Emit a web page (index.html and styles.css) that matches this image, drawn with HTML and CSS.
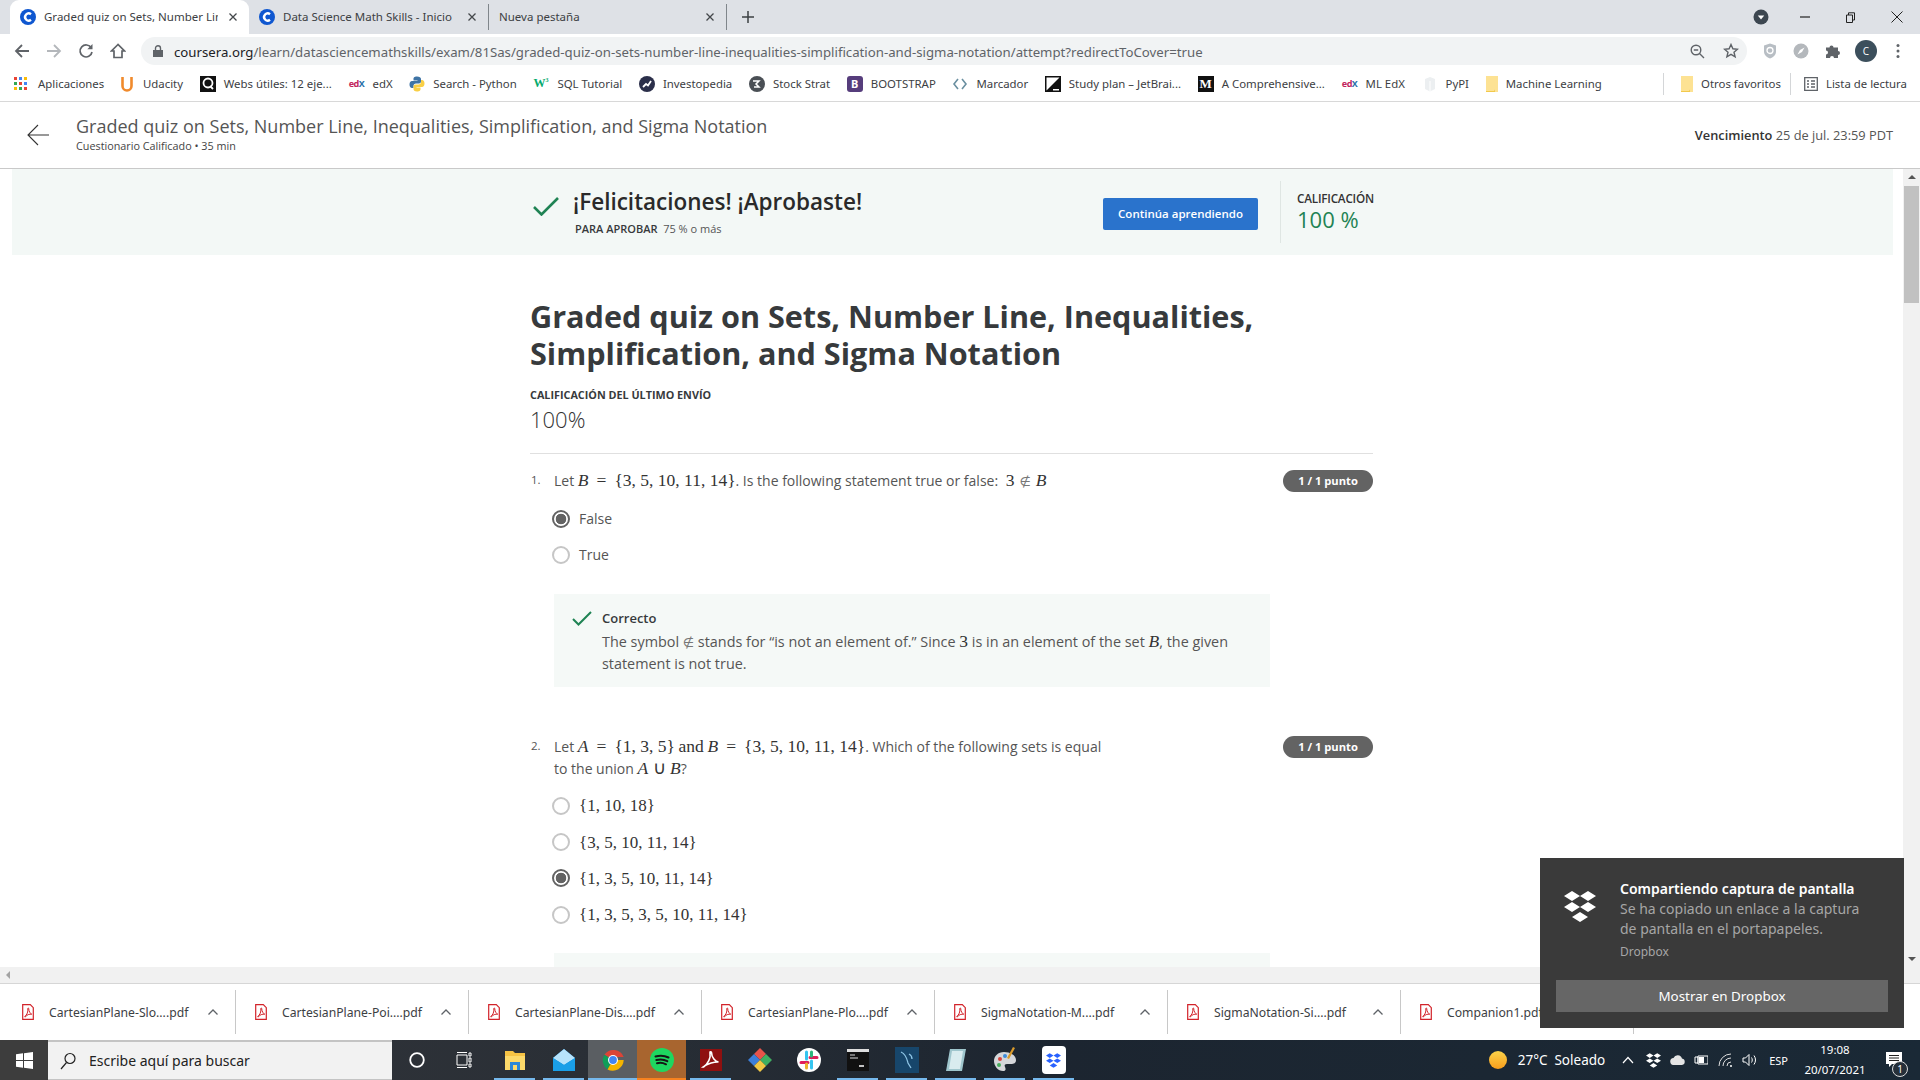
FILE: index.html
```html
<!DOCTYPE html>
<html lang="es">
<head>
<meta charset="utf-8">
<title>Graded quiz</title>
<link rel="stylesheet" href="styles.css">
</head>
<body>
<svg class="defs" width="0" height="0" aria-hidden="true">
  <symbol id="cou" viewBox="0 0 16 16"><circle cx="8" cy="8" r="8" fill="#0f57d0"/><path d="M11 5.200A3.600 3.600 0 1 0 11 10.800" fill="none" stroke="#fff" stroke-width="2.400"/></symbol>
  <symbol id="x" viewBox="0 0 10 10"><path d="M1.500 1.500l7 7M8.500 1.500l-7 7" stroke="#44474b" stroke-width="1.300" fill="none"/></symbol>
  <symbol id="pdf" viewBox="0 0 12 16"><path d="M.7.700h7.600l3 3v11.600H.7z" fill="#fff" stroke="#d2232a" stroke-width="1.200"/><path d="M2.600 12.600C5 11 6.300 7.600 5.800 4.600c-.2-.9.9-.9.9 0 0 3 2 5.200 3 5.600-2.200-.2-5 .4-6.400 2.800z" fill="none" stroke="#d2232a" stroke-width="1"/></symbol>
  <symbol id="chev" viewBox="0 0 12 8"><path d="M1.500 6.500L6 2l4.500 4.500" fill="none" stroke="#5f6368" stroke-width="1.300"/></symbol>
  <symbol id="fold" viewBox="0 0 12 16"><path d="M0 0h12v16H0z" fill="#fde293"/><path d="M0 15h8l1-1.500V16H0z" fill="#f2c94c"/></symbol>
  <symbol id="drop" viewBox="0 0 32 31"><path d="M8 0l8 5-8 5-8-5zM24 0l8 5-8 5-8-5zM8 11l8 5-8 5-8-5zM24 11l8 5-8 5-8-5zM16 21l8 5-8 5-8-5z" fill="#fff"/></symbol>
</svg>

<div class="tabstrip">
  <div class="tab tab-active"><svg class="fav"><use href="#cou"/></svg><span class="tabtext">Graded quiz on Sets, Number Line, Inequalities</span><svg class="tabx"><use href="#x"/></svg></div>
  <div class="tab"><svg class="fav"><use href="#cou"/></svg><span class="tabtext">Data Science Math Skills - Inicio | Coursera</span><svg class="tabx"><use href="#x"/></svg></div>
  <div class="tab tab-sep"><span class="tabtext tabtext-plain">Nueva pestaña</span><svg class="tabx"><use href="#x"/></svg></div>
  <div class="newtab"><svg width="12" height="12" viewBox="0 0 12 12"><path d="M6 0v12M0 6h12" stroke="#3c4043" stroke-width="1.500"/></svg></div>
  <div class="winctl">
    <svg width="16" height="16" viewBox="0 0 16 16" class="wc-prof"><circle cx="8" cy="8" r="7.500" fill="#3c4650"/><path d="M4.800 6.500h6.400L8 10.500z" fill="#fff"/></svg>
    <svg width="10" height="10" viewBox="0 0 10 10" class="wc-min"><path d="M0 5h10" stroke="#222" stroke-width="1.200"/></svg>
    <svg width="11" height="11" viewBox="0 0 11 11" class="wc-res"><path d="M1.500 3h6v7.500h-6zM3.500 3V.8h6v7.200H7.500" fill="none" stroke="#222"/></svg>
    <svg width="12" height="12" viewBox="0 0 12 12" class="wc-close"><path d="M.5.500l11 11M11.500.500l-11 11" stroke="#222"/></svg>
  </div>
</div>

<div class="toolbar">
  <svg class="tb t1" viewBox="0 0 16 16"><path d="M15 8H2M8 2L2 8l6 6" fill="none" stroke="#5f6368" stroke-width="1.800"/></svg>
  <svg class="tb t2" viewBox="0 0 16 16"><path d="M1 8h13M8 2l6 6-6 6" fill="none" stroke="#b4b7bb" stroke-width="1.800"/></svg>
  <svg class="tb t3" viewBox="0 0 16 16"><path d="M13.300 5A6 6 0 1 0 14 9" fill="none" stroke="#5f6368" stroke-width="1.700"/><path d="M14.500 1v5.200H9.300z" fill="#5f6368"/></svg>
  <svg class="tb t4" viewBox="0 0 16 16"><path d="M8 1.500L1.500 8H4v6.500h8V8h2.500z" fill="none" stroke="#5f6368" stroke-width="1.700"/></svg>
  <div class="omni">
    <svg class="lock" width="10" height="12" viewBox="0 0 10 12"><path d="M0 5h10v7H0z" fill="#5f6368"/><path d="M2.500 5V3.200a2.500 2.500 0 0 1 5 0V5" fill="none" stroke="#5f6368" stroke-width="1.400"/></svg>
    <span class="url"><b>coursera.org</b>/learn/datasciencemathskills/exam/81Sas/graded-quiz-on-sets-number-line-inequalities-simplification-and-sigma-notation/attempt?redirectToCover=true</span>
    <svg class="om1" width="15" height="15" viewBox="0 0 15 15"><circle cx="6" cy="6" r="4.800" fill="none" stroke="#5f6368" stroke-width="1.400"/><path d="M9.500 9.500L14 14M3.800 6h4.400" stroke="#5f6368" stroke-width="1.400"/></svg>
    <svg class="om2" width="16" height="16" viewBox="0 0 16 16"><path d="M8 1.500l1.900 4.300 4.600.4-3.500 3 1.100 4.600L8 11.300l-4.100 2.500L5 9.200l-3.500-3 4.600-.4z" fill="none" stroke="#5f6368" stroke-width="1.400"/></svg>
  </div>
  <div class="exts">
    <svg width="14" height="16" viewBox="0 0 14 16"><path d="M7 .5l6 2v6c0 3.500-3 6-6 7-3-1-6-3.500-6-7v-6z" fill="#b8bec4"/><circle cx="7" cy="7.500" r="3" fill="none" stroke="#fff" stroke-width="1.300"/></svg>
    <svg width="16" height="16" viewBox="0 0 16 16"><circle cx="8" cy="8" r="7.500" fill="#b4b8bc"/><path d="M11.500 4.500L9 9l-4.500 2.500L7 7z" fill="#fff"/></svg>
    <svg width="16" height="16" viewBox="0 0 16 16"><path d="M1 4.500h3.500a2 2 0 1 1 4 0H13V8a2 2 0 1 1 0 4v3H9a2 2 0 1 0-4 0H1v-3.500a2 2 0 1 0 0-4z" fill="#5f6368"/></svg>
    <span class="avatar">C</span>
    <svg width="4" height="16" viewBox="0 0 4 16"><circle cx="2" cy="2.500" r="1.500" fill="#5f6368"/><circle cx="2" cy="8" r="1.500" fill="#5f6368"/><circle cx="2" cy="13.500" r="1.500" fill="#5f6368"/></svg>
  </div>
</div>

<div class="bookmarks">
  <span class="bm bm-apps"><svg width="14" height="14" viewBox="0 0 14 14"><path d="M0 0h3v3H0z" fill="#ea4335"/><path d="M5 0h3v3H5z" fill="#4285f4"/><path d="M10 0h3v3h-3z" fill="#fbbc05"/><path d="M0 5h3v3H0z" fill="#34a853"/><path d="M5 5h3v3H5z" fill="#ea4335"/><path d="M10 5h3v3h-3z" fill="#4285f4"/><path d="M0 10h3v3H0z" fill="#fbbc05"/><path d="M5 10h3v3H5z" fill="#34a853"/><path d="M10 10h3v3h-3z" fill="#ea4335"/></svg>Aplicaciones</span>
  <span class="bm bm-u"><svg width="12" height="16" viewBox="0 0 12 16"><path d="M1.500 1v9a4.500 4.500 0 0 0 9 0V1" fill="none" stroke="#f08a2c" stroke-width="2.600"/></svg>Udacity</span>
  <span class="bm"><svg width="16" height="16" viewBox="0 0 16 16"><path d="M0 0h16v16H0z" fill="#111"/><circle cx="8" cy="7" r="4.500" fill="none" stroke="#fff" stroke-width="1.800"/><path d="M10 10l3 3" stroke="#fff" stroke-width="1.800"/></svg>Webs útiles: 12 eje...</span>
  <span class="bm"><span class="edx"><i>ed</i><u>X</u></span>edX</span>
  <span class="bm"><svg width="16" height="16" viewBox="0 0 16 16"><path d="M8 .5c-3 0-3.500 1.200-3.500 2.500v1.500H8.500V5H3C1.500 5 .5 6.500.5 8.500S1.500 12 3 12h1.500v-2c0-1.500 1-2.500 2.500-2.500h3c1.200 0 2-.8 2-2V3C12 1.500 10.500.5 8 .5z" fill="#3f74a5"/><path d="M8 15.500c3 0 3.500-1.200 3.500-2.500v-1.500H7.500V11H13c1.500 0 2.500-1.500 2.500-3.500S14.500 4 13 4h-1v2c0 1.500-1 2.500-2.500 2.500h-3c-1.200 0-2 .8-2 2V13c0 1.500 1 2.500 3.500 2.500z" fill="#f9cf45"/></svg>Search - Python</span>
  <span class="bm bm-w"><span class="w3">W<sup>3</sup></span>SQL Tutorial</span>
  <span class="bm"><svg width="16" height="16" viewBox="0 0 16 16"><circle cx="8" cy="8" r="8" fill="#2b2f4a"/><path d="M4 11l3-3 2 1.500L12 5" fill="none" stroke="#fff" stroke-width="1.800"/></svg>Investopedia</span>
  <span class="bm"><svg width="16" height="16" viewBox="0 0 16 16"><circle cx="8" cy="8" r="8" fill="#4a4f55"/><path d="M4 5h6l-3 3 3 3H5" fill="none" stroke="#fff" stroke-width="1.500"/></svg>Stock Strat</span>
  <span class="bm"><span class="bs">B</span>BOOTSTRAP</span>
  <span class="bm"><svg width="16" height="16" viewBox="0 0 16 16"><path d="M6 3L2 8l4 5M10 3l4 5-4 5" fill="none" stroke="#6a8fa0" stroke-width="1.600"/></svg>Marcador</span>
  <span class="bm"><svg width="16" height="16" viewBox="0 0 16 16"><path d="M0 0h16v16H0z" fill="#111"/><path d="M1.500 1.500h13L1.500 14.500z" fill="#fff"/><path d="M8 13h6v1.500H8z" fill="#fff"/></svg>Study plan – JetBrai...</span>
  <span class="bm"><span class="mm">M</span>A Comprehensive...</span>
  <span class="bm"><span class="edx"><i>ed</i><u>X</u></span>ML EdX</span>
  <span class="bm"><svg width="16" height="16" viewBox="0 0 16 16"><path d="M3 3l5-2 5 2v10l-5 2.500L3 13z" fill="#eceff1"/><path d="M8 5v10.500" stroke="#fff"/></svg>PyPI</span>
  <span class="bm"><svg width="12" height="16"><use href="#fold"/></svg>Machine Learning</span>
  <span class="bm-right">
    <span class="bmsep"></span>
    <span class="bm bm-oth"><svg width="12" height="16"><use href="#fold"/></svg>Otros favoritos</span>
    <span class="bmsep"></span>
    <span class="bm"><svg width="14" height="14" viewBox="0 0 14 14"><path d="M.7.700h12.600v12.600H.7z" fill="none" stroke="#5f6368" stroke-width="1.300"/><path d="M3 4h2M7 4h4M3 7h2M7 7h4M3 10h2M7 10h4" stroke="#5f6368" stroke-width="1.300"/></svg>Lista de lectura</span>
  </span>
</div>

<header class="apphead">
  <svg class="back" width="22" height="22" viewBox="0 0 22 22"><path d="M22 11H1M11 1L1 11l10 10" fill="none" stroke="#333" stroke-width="1.100"/></svg>
  <div class="headtext">
    <div class="headtitle">Graded quiz on Sets, Number Line, Inequalities, Simplification, and Sigma Notation</div>
    <div class="headsub">Cuestionario Calificado • 35 min</div>
  </div>
  <div class="due"><b>Vencimiento</b> 25 de jul. 23:59 PDT</div>
</header>

<div class="mainrow">
  <main class="page">
    <section class="banner">
      <svg class="bcheck" width="26" height="19" viewBox="0 0 26 19"><path d="M1 10l7.500 7.500L25 1" fill="none" stroke="#1f8354" stroke-width="2.600"/></svg>
      <div class="bmsg">
        <div class="btitle">¡Felicitaciones! ¡Aprobaste!</div>
        <div class="bsub"><b>PARA APROBAR</b>&nbsp; 75 % o más</div>
      </div>
      <button class="cta">Continúa aprendiendo</button>
      <div class="grade">
        <div class="gradelabel">CALIFICACIÓN</div>
        <div class="gradeval">100 %</div>
      </div>
    </section>

    <section class="quiz">
      <h1 class="qtitle">Graded quiz on Sets, Number Line, Inequalities, Simplification, and Sigma Notation</h1>
      <div class="lastlabel">CALIFICACIÓN DEL ÚLTIMO ENVÍO</div>
      <div class="lastval">100%</div>
      <hr class="rule">

      <article class="q q1">
        <span class="qnum">1.</span>
        <div class="qbody">
          <p class="qtext">Let <span class="m"><i>B</i><span class="op">=</span>{3, 5, 10, 11, 14}</span>. Is the following statement true or false: <span class="m mgap">3<span class="op2 nin">∉</span><i>B</i></span></p>
          <div class="opts">
            <div class="opt"><span class="radio on"></span>False</div>
            <div class="opt"><span class="radio"></span>True</div>
          </div>
          <div class="fb">
            <svg class="fbcheck" width="20" height="15" viewBox="0 0 20 15"><path d="M1 8l5.500 5.500L19 1" fill="none" stroke="#1f8354" stroke-width="2"/></svg>
            <div class="fbtext">
              <div class="fbhead">Correcto</div>
              <div class="fbbody">The symbol <span class="m nin">∉</span> stands for “is not an element of.” Since <span class="m">3</span> is in an element of the set <span class="m"><i>B</i></span>, the given statement is not true.</div>
            </div>
          </div>
        </div>
        <span class="pill">1 / 1 punto</span>
      </article>

      <article class="q q2">
        <span class="qnum">2.</span>
        <div class="qbody">
          <p class="qtext">Let <span class="m"><i>A</i><span class="op">=</span>{1, 3, 5}</span> <span class="m">and</span> <span class="m"><i>B</i><span class="op">=</span>{3, 5, 10, 11, 14}</span>. Which of the following sets is equal<br>to the union <span class="m"><i>A</i> ∪ <i>B</i></span>?</p>
          <div class="opts opts2">
            <div class="opt"><span class="radio"></span><span class="m mopt">{1, 10, 18}</span></div>
            <div class="opt"><span class="radio"></span><span class="m mopt">{3, 5, 10, 11, 14}</span></div>
            <div class="opt"><span class="radio on"></span><span class="m mopt">{1, 3, 5, 10, 11, 14}</span></div>
            <div class="opt"><span class="radio"></span><span class="m mopt">{1, 3, 5, 3, 5, 10, 11, 14}</span></div>
          </div>
          <div class="fb fb2"></div>
        </div>
        <span class="pill">1 / 1 punto</span>
      </article>
    </section>
  </main>
  <div class="vscroll">
    <span class="arr arr-up"></span>
    <span class="thumb"></span>
    <span class="arr arr-down"></span>
  </div>
</div>

<div class="hscroll"><span class="arr-left"></span></div>

<div class="shelf">
  <div class="dl"><svg class="pdf"><use href="#pdf"/></svg><span class="dlname">CartesianPlane-Slo....pdf</span><svg class="dlchev"><use href="#chev"/></svg></div>
  <div class="dl"><svg class="pdf"><use href="#pdf"/></svg><span class="dlname">CartesianPlane-Poi....pdf</span><svg class="dlchev"><use href="#chev"/></svg></div>
  <div class="dl"><svg class="pdf"><use href="#pdf"/></svg><span class="dlname">CartesianPlane-Dis....pdf</span><svg class="dlchev"><use href="#chev"/></svg></div>
  <div class="dl"><svg class="pdf"><use href="#pdf"/></svg><span class="dlname">CartesianPlane-Plo....pdf</span><svg class="dlchev"><use href="#chev"/></svg></div>
  <div class="dl"><svg class="pdf"><use href="#pdf"/></svg><span class="dlname">SigmaNotation-M....pdf</span><svg class="dlchev"><use href="#chev"/></svg></div>
  <div class="dl"><svg class="pdf"><use href="#pdf"/></svg><span class="dlname">SigmaNotation-Si....pdf</span><svg class="dlchev"><use href="#chev"/></svg></div>
  <div class="dl"><svg class="pdf"><use href="#pdf"/></svg><span class="dlname">Companion1.pdf</span><svg class="dlchev"><use href="#chev"/></svg></div>
  <svg class="shelfx"><use href="#x"/></svg>
</div>

<footer class="taskbar">
  <div class="start"><svg width="17" height="17" viewBox="0 0 17 17"><path d="M0 2.300l7-1v6.800H0zM8 1.200L17 0v8.100H8zM0 9h7v6.800l-7-1zM8 9h9v8l-9-1.200z" fill="#fff"/></svg></div>
  <div class="search"><svg width="16" height="18" viewBox="0 0 16 18"><circle cx="10" cy="6.500" r="5" fill="none" stroke="#222" stroke-width="1.200"/><path d="M6.500 10.500L1 17" stroke="#222" stroke-width="1.200"/></svg>Escribe aquí para buscar</div>
  <div class="apps">
    <div class="app"><svg width="16" height="16" viewBox="0 0 16 16"><circle cx="8" cy="8" r="6.800" fill="none" stroke="#fff" stroke-width="1.800"/></svg></div>
    <div class="app app-tv"><svg width="16" height="16" viewBox="0 0 16 16"><path d="M1 3h10v10H1zM13 1h2v3h-2zM13 6h2v4h-2zM13 12h2v3h-2zM1 .5h10M1 15.500h10" fill="none" stroke="#fff"/></svg></div>
    <div class="app act"><svg width="24" height="24" viewBox="0 0 24 24"><path d="M2 3h8l2 2h10v4H2z" fill="#f6c344"/><path d="M2 8h20v14H2z" fill="#fcd96a"/><path d="M7 14h10v8H7z" fill="#2b88d8"/><path d="M10 17h4v5h-4z" fill="#fcd96a"/></svg></div>
    <div class="app act"><svg width="24" height="24" viewBox="0 0 24 24"><path d="M1 10L12 1l11 9v13H1z" fill="#0f8bd9"/><path d="M12 1l11 9-11 7L1 10z" fill="#b7e3fb"/><path d="M1 10l11 7 11-7v13H1z" fill="#1a9fe8"/></svg></div>
    <div class="app act chrome"><svg width="24" height="24" viewBox="0 0 24 24"><path d="M12 12L3.400 6.700A11 11 0 0 1 22.700 9H12z" fill="#db4437"/><path d="M12 12l-5.500 9.500A11 11 0 0 1 3.400 6.700z" fill="#0f9d58"/><path d="M12 12h10.700A11 11 0 0 1 6.500 21.500z" fill="#f4b400"/><circle cx="12" cy="12" r="5" fill="#fff"/><circle cx="12" cy="12" r="3.900" fill="#4285f4"/></svg></div>
    <div class="app spot"><svg width="24" height="24" viewBox="0 0 24 24"><circle cx="12" cy="12" r="12" fill="#1ed760"/><path d="M5.500 8.500c4.500-1.300 9-1 13 1M6.300 12c3.800-1 7.700-.7 11 1.200M7 15.300c3-.8 6-.5 9 1" fill="none" stroke="#151515" stroke-width="2" stroke-linecap="round"/></svg></div>
    <div class="app act"><svg width="24" height="24" viewBox="0 0 24 24"><path d="M1 1h22v22H1z" fill="#8f1010"/><path d="M4.500 19C9 16 12 10 11 4.500c-.2-1 1.500-1 1.500 0 0 5 4 9 7 9.500-3.500-.2-11 1-15.500 5z" fill="none" stroke="#fff" stroke-width="1.600"/></svg></div>
    <div class="app"><svg width="24" height="26" viewBox="0 0 24 26"><path d="M12 1l6 6-6 6-6-6z" fill="#e8534a"/><path d="M6 7l6 6-6 6-6-6z" fill="#3d7fd9"/><path d="M18 7l6 6-6 6-6-6z" fill="#3fae62"/><path d="M12 13l6 6-6 6-6-6z" fill="#f2c744"/></svg></div>
    <div class="app"><svg width="24" height="24" viewBox="0 0 24 24"><circle cx="12" cy="12" r="12" fill="#fff"/><path d="M9.500 4v7M14.500 13v7" stroke="#36c5f0" stroke-width="3" stroke-linecap="round"/><path d="M4 14.500h7M13 9.500h7" stroke="#e01e5a" stroke-width="3" stroke-linecap="round"/><path d="M14.500 4v4" stroke="#2eb67d" stroke-width="3" stroke-linecap="round"/><path d="M9.500 16v4" stroke="#ecb22e" stroke-width="3" stroke-linecap="round"/></svg></div>
    <div class="app act"><svg width="22" height="22" viewBox="0 0 22 22"><path d="M0 0h22v22H0z" fill="#111"/><path d="M0 0h22v3H0z" fill="#ddd"/><path d="M3 6h5M3 9h8" stroke="#ddd"/><path d="M12 17h5" stroke="#fff" stroke-width="1.500"/></svg></div>
    <div class="app act"><svg width="24" height="26" viewBox="0 0 24 26"><path d="M0 0h24v26H0z" fill="#17466b"/><path d="M6 5c5 2 6 7 7 11l3 5M14 7c2 1 3 3 3 5" fill="none" stroke="#8ec5e6" stroke-width="1.300"/></svg></div>
    <div class="app act"><svg width="22" height="24" viewBox="0 0 22 24"><path d="M5 1h16l-4 22H1z" fill="#9fc6cd"/><path d="M7 3h11l-3 18H4z" fill="#d9ecef"/></svg></div>
    <div class="app act"><svg width="24" height="26" viewBox="0 0 24 26"><path d="M11 5C5 5 1 9 1 14s4 10 9 10c3 0 3-2 2-4-1-2 0-3 2-3h4c3 0 5-1 5-4 0-5-6-8-12-8z" fill="#d5d7da"/><circle cx="7" cy="12" r="2" fill="#d9453d"/><circle cx="12" cy="9" r="2" fill="#3f8cd9"/><circle cx="6" cy="18" r="2" fill="#46ad5d"/><path d="M20 0l2 1-6 11-2-1z" fill="#d99a2b"/></svg></div>
    <div class="app act"><span class="dbx"><svg width="15" height="15"><use href="#drop"/></svg></span></div>
  </div>
  <div class="tray">
    <span class="sun"></span>
    <span class="weather">27°C &nbsp;Soleado</span>
    <svg class="tr1" width="12" height="8" viewBox="0 0 12 8"><path d="M1 7l5-5.500L11 7" fill="none" stroke="#fff" stroke-width="1.200"/></svg>
    <svg class="tr tr-a" width="15" height="15"><use href="#drop"/></svg>
    <svg class="tr tr-a" width="15" height="10" viewBox="0 0 15 10"><path d="M4 10a3.500 3.500 0 0 1-.5-7A4.500 4.500 0 0 1 12 3.500 3.300 3.300 0 0 1 12 10z" fill="#e4e4e4"/></svg>
    <svg class="tr" width="14" height="12" viewBox="0 0 14 12"><path d="M4 2h10v8H4zM1 3h3v6H1z" fill="none" stroke="#fff"/><path d="M5 3h5v6H5z" fill="#fff"/></svg>
    <svg class="tr tr-b" width="16" height="14" viewBox="0 0 16 14"><path d="M1 13A12 12 0 0 1 13 1M5 13a8 8 0 0 1 8-8M9 13a4 4 0 0 1 4-4" fill="none" stroke="#ddd"/><circle cx="13" cy="13" r="1" fill="#fff"/></svg>
    <svg class="tr" width="15" height="14" viewBox="0 0 15 14"><path d="M1 5h2.500L7 1.500v11L3.500 9H1z" fill="none" stroke="#fff"/><path d="M9.500 4.500c1 1.500 1 3.500 0 5M12 2.500c2 3 2 6 0 9" fill="none" stroke="#fff"/></svg>
    <span class="lang">ESP</span>
    <div class="clock"><div>19:08</div><div>20/07/2021</div></div>
    <div class="notif"><svg width="16" height="16" viewBox="0 0 16 16"><path d="M0 0h16v12H6l-3 3v-3H0z" fill="#fff"/><path d="M3 3.500h10M3 6h10M3 8.500h10" stroke="#222"/></svg><span class="nbadge">1</span></div>
  </div>
</footer>

<aside class="toast">
  <div class="toasttop">
    <svg class="toasticon"><use href="#drop"/></svg>
    <div class="toastmsg">
      <div class="toasttitle">Compartiendo captura de pantalla</div>
      <div class="toastbody">Se ha copiado un enlace a la captura de pantalla en el portapapeles.</div>
      <div class="toastapp">Dropbox</div>
    </div>
  </div>
  <div class="toastbtn">Mostrar en Dropbox</div>
</aside>
</body>
</html>
```

FILE: styles.css
```css
* { box-sizing: border-box; }
html, body { margin: 0; padding: 0; }
body {
  width: 1920px; height: 1080px; overflow: hidden; position: relative;
  display: flex; flex-direction: column;
  font-family: "Open Sans", "Noto Sans", sans-serif; color: #333; background: #fff;
}
.defs { position: absolute; }

/* tab strip */
.tabstrip { height: 34px; flex: none; background: #dee1e6; display: flex; align-items: stretch; padding-left: 10px; }
.tab { width: 239px; display: flex; align-items: center; padding: 0 11px 0 10px; position: relative; font-size: 11.500px; color: #3c4043; font-family: "Noto Sans", sans-serif; }
.tab-active { background: #fff; border-radius: 9px 9px 0 0; }
.tab-sep { border-left: 1px solid #80868b; height: 26px; margin-top: 4px; border-right: 1px solid #80868b; width: 239px; }
.fav { width: 16px; height: 16px; flex: none; margin-right: 8px; }
.tabtext { width: 174px; white-space: nowrap; overflow: hidden; flex: none; line-height: 18px; padding-bottom: 1px; }
.tabtext-plain { width: 198px; }
.tabx { width: 10px; height: 10px; margin-left: auto; flex: none; }
.newtab { width: 42px; display: flex; align-items: center; justify-content: center; }
.winctl { margin-left: auto; display: flex; align-items: center; }
.wc-prof { margin-right: 31px; }
.wc-min { margin-right: 35px; }
.wc-res { margin-right: 35px; }
.wc-close { margin-right: 17px; }

/* toolbar */
.toolbar { height: 34px; flex: none; display: flex; align-items: center; padding-left: 14px; background: #fff; }
.tb { width: 16px; height: 16px; flex: none; margin-right: 16px; }
.t4 { margin-right: 15px; }
.omni { width: 1606px; height: 28px; border-radius: 14px; background: #f1f3f4; display: flex; align-items: center; padding-left: 12px; flex: none; position: relative; }
.lock { margin-right: 11px; }
.url { font-size: 13.230px; line-height: 18px; padding-top: 1px; color: #5f6368; font-family: "Noto Sans", sans-serif; white-space: nowrap; }
.url b { font-weight: 400; color: #202124; }
.om1 { margin-left: auto; margin-right: 18px; }
.om2 { margin-right: 8px; }
.exts { display: flex; align-items: center; margin-left: 16px; gap: 16px; }
.avatar { width: 22px; height: 22px; border-radius: 50%; background: #3c4f5c; color: #fff; font-size: 10px; display: flex; align-items: center; justify-content: center; margin-left: -2px; margin-right: 3px; }

/* bookmarks */
.bookmarks { height: 34px; flex: none; display: flex; align-items: center; padding: 0 0 2px 14px; gap: 16.700px; font-family: "Noto Sans", sans-serif; font-size: 11.400px; color: #3c4043; border-bottom: 1px solid #d8d8d8; white-space: nowrap; }
.bm { display: inline-flex; align-items: center; gap: 8px; }
.bm-apps { gap: 10px; }
.bm-u { gap: 10px; }
.bm-right { margin-left: auto; display: flex; align-items: center; gap: 13px; padding-right: 13px; }
.bm-oth { margin-left: 4px; margin-right: -4px; }
.bmsep { width: 1px; height: 22px; background: #d4d6d8; }
.edx { width: 16px; font-size: 9px; font-weight: 700; color: #2a6fa8; letter-spacing: -.5px; display: inline-block; text-align: center; }
.edx i { color: #c2255c; font-style: normal; }
.edx u { text-decoration: none; }
.w3 { width: 14px; font-size: 12px; font-weight: 700; color: #04aa6d; font-family: "Liberation Serif", serif; }
.w3 sup { font-size: 6px; }
.bm-w { gap: 10px; }
.bs { width: 16px; height: 16px; background: #563d7c; color: #fff; border-radius: 3px; font-weight: 700; font-size: 11px; display: flex; align-items: center; justify-content: center; }
.mm { width: 16px; height: 16px; background: #111; color: #fff; font-family: "Liberation Serif", serif; font-weight: 700; font-size: 13px; display: flex; align-items: center; justify-content: center; }

/* coursera header */
.apphead { height: 67px; flex: none; display: flex; align-items: center; padding-left: 27px; padding-right: 27px; border-bottom: 1px solid #c9c9c9; }
.back { margin-right: 27px; flex: none; }
.headtext { margin-top: -2px; }
.headtitle { font-size: 18px; line-height: 24px; color: #555; }
.headsub { font-size: 10.800px; line-height: 16px; color: #444; }
.due { margin-left: auto; font-size: 12.800px; color: #555; }
.due b { font-weight: 600; color: #333; }

.mainrow { flex: 1; min-height: 0; display: flex; }
.page { flex: 1; min-width: 0; overflow: hidden; }

.banner { height: 86px; margin: 0 10px 0 12px; background: #f3f8f6; display: flex; align-items: flex-start; padding-left: 521px; }
.bcheck { margin-top: 28px; margin-right: 14px; flex: none; }
.bmsg { width: 530px; padding-top: 16px; }
.btitle { font-size: 22.500px; line-height: 34px; font-weight: 600; color: #2a2a2a; }
.bsub { font-size: 11px; line-height: 16px; margin-top: 2px; margin-left: 2px; color: #555; }
.bsub b { font-weight: 600; color: #373a3c; }
.cta { width: 155px; height: 32px; margin-top: 29px; border: 0; border-radius: 2px; background: #2a73cc; color: #fff; font: 600 11.500px "Open Sans", sans-serif; padding: 0 0 2px; flex: none; }
.grade { margin-left: 22px; margin-top: 12px; height: 62px; border-left: 1px solid #dfe6e3; padding-left: 16px; }
.gradelabel { font-size: 11.700px; font-weight: 600; line-height: 16px; margin-top: 9px; color: #333; letter-spacing: -.2px; }
.gradeval { font-size: 22px; line-height: 26px; color: #1f8354; }

.quiz { margin-left: 530px; width: 843px; }
.qtitle { font-size: 30.600px; line-height: 37px; font-weight: 700; margin: 43px 0 0 0; color: #373a3c; }
.lastlabel { font-size: 10.800px; font-weight: 700; line-height: 16px; margin: 15px 0 0 0; color: #373a3c; }
.lastval { font-size: 22px; font-weight: 300; line-height: 30px; margin: 1px 0 0 0; color: #333; }
.rule { border: 0; border-top: 1px solid #e0e0e0; margin: 19px 0 0; }

.q { display: flex; align-items: flex-start; }
.q1 { margin-top: 16px; }
.q2 { margin-top: 49px; }
.qnum { width: 23px; flex: none; font-size: 11.500px; line-height: 20px; margin-left: 1px; color: #555; }
.qbody { width: 716px; flex: none; }
.qtext { margin: 0; font-size: 14px; line-height: 22px; color: #555; }
.m { font-family: "Liberation Serif", serif; font-size: 17.500px; line-height: 1; color: #333; }
.m i { font-style: italic; }
.op { margin: 0 8px; }
.op2 { margin: 0 5px; }
.mgap { margin-left: 4px; }
.nin { font-family: "DejaVu Sans", sans-serif; font-size: 13px; color: #777; }
.mopt { font-size: 17px; }
.opts { margin: 13px 0 0 -2px; display: flex; flex-direction: column; gap: 9.300px; }
.opts2 { margin-top: 12px; }
.opt { display: flex; align-items: center; height: 27px; font-size: 14px; color: #555; }
.radio { width: 18px; height: 18px; border-radius: 50%; border: 2px solid #c6c6c6; background: #fff; margin-right: 9px; flex: none; position: relative; }
.radio.on { border-color: #636363; background: radial-gradient(circle, #636363 0, #636363 5px, #fff 5.600px); }
.fb { margin-top: 26px; height: 93px; background: #f5f9f7; padding: 15px 19px 15px 18px; display: flex; }
.fbcheck { flex: none; margin-top: 2px; margin-right: 10px; }
.fbhead { font-size: 13px; font-weight: 600; line-height: 18px; color: #373a3c; }
.fbbody { font-size: 14.400px; line-height: 22px; margin-top: 4px; color: #555; width: 660px; }
.fb2 { margin-top: 25px; height: 40px; }
.pill { width: 90px; height: 22px; border-radius: 11px; background: #636363; color: #fff; font-size: 11.200px; font-weight: 700; text-align: center; line-height: 22px; margin-left: 13px; flex: none; }

/* scrollbars */
.vscroll { width: 17px; flex: none; background: #f1f1f1; position: relative; display: flex; flex-direction: column; align-items: center; }
.arr { width: 0; height: 0; border-left: 4px solid transparent; border-right: 4px solid transparent; margin: 6px 0; flex: none; }
.arr-up { border-bottom: 4px solid #555; }
.arr-down { border-top: 4px solid #555; margin-top: auto; }
.thumb { width: 15px; height: 117px; background: #c1c1c1; margin-top: 1px; flex: none; }
.hscroll { height: 16px; flex: none; background: #f1f1f1; display: flex; align-items: center; padding-left: 6px; }
.arr-left { width: 0; height: 0; border-top: 4px solid transparent; border-bottom: 4px solid transparent; border-right: 4px solid #a3a3a3; }

/* downloads */
.shelf { height: 57px; flex: none; border-top: 1px solid #d6d6d6; display: flex; align-items: center; padding-left: 3px; position: relative; font-family: "Noto Sans", sans-serif; font-size: 12.200px; color: #3c4043; }
.dl { width: 233px; height: 44px; border-right: 1px solid #c8c8c8; display: flex; align-items: center; padding-left: 19px; flex: none; }
.pdf { width: 12px; height: 16px; margin-right: 15px; flex: none; }
.dlname { white-space: nowrap; width: 148px; flex: none; overflow: hidden; }
.dlchev { width: 12px; height: 8px; margin-left: 10px; flex: none; }
.shelfx { width: 12px; height: 12px; margin-left: 33px; flex: none; }

/* taskbar */
.taskbar { height: 40px; flex: none; display: flex; background: linear-gradient(90deg, #33363b 0, #2a2f36 30%, #1c2530 55%, #1a2936 100%); color: #fff; }
.start { width: 48px; background: #3d3d3d; display: flex; align-items: center; justify-content: center; }
.search { width: 344px; background: #f2f2f2; border: 2px solid #c4c4c4; border-left: 0; border-right: 0; border-bottom: 1px solid #c4c4c4; display: flex; align-items: center; gap: 13px; padding-left: 12px; color: #222; font-family: "Noto Sans", sans-serif; font-size: 14px; }
.apps { display: flex; }
.app { width: 49px; display: flex; align-items: center; justify-content: center; position: relative; }
.app-tv svg { margin-right: 4px; }
.act::after, .spot::after { content: ""; position: absolute; left: 4px; right: 4px; bottom: 0; height: 2px; background: #76b9ed; }
.chrome { background: #5a5e62; }
.chrome::after { left: 0; right: 0; }
.spot { background: #a8652f; }
.spot::after { left: 0; right: 0; background: #f7821f; }
.dbx { width: 24px; height: 28px; border-radius: 4px; background: #fff; display: flex; align-items: center; justify-content: center; }
.dbx svg { filter: brightness(0) saturate(100%) invert(28%) sepia(95%) saturate(3000%) hue-rotate(220deg); }
.tray { margin-left: auto; display: flex; align-items: center; font-family: "Noto Sans", sans-serif; font-size: 13.500px; white-space: nowrap; }
.sun { width: 18px; height: 18px; border-radius: 50%; background: linear-gradient(#fcd34a, #f89d1c); margin-right: 11px; }
.weather { margin-right: 17px; }
.tr1 { margin-right: 12px; }
.tr { margin-right: 10px; }
.tr-a { margin-right: 9px; }
.tr-b { margin-right: 8px; }
.lang { font-size: 11px; margin-left: 2px; margin-right: 14px; }
.clock { width: 66px; text-align: center; font-size: 11.500px; line-height: 20px; }
.notif { width: 52px; height: 40px; display: flex; align-items: center; justify-content: center; position: relative; }
.nbadge { position: absolute; right: 12px; bottom: 3px; width: 16px; height: 16px; border-radius: 50%; border: 1px solid #ddd; background: #26303a; font-size: 10px; line-height: 14px; text-align: center; }

/* toast */
.toast { position: absolute; left: 1540px; top: 858px; width: 364px; height: 170px; background: #3a3a3a; color: #fff; font-family: "Noto Sans", sans-serif; padding: 23px 16px 16px; display: flex; flex-direction: column; }
.toasttop { display: flex; padding-left: 8px; }
.toasticon { width: 32px; height: 31px; margin-top: 10px; margin-right: 24px; flex: none; }
.toasttitle { font-size: 14px; font-weight: 600; line-height: 20px; margin-top: -2px; }
.toastbody { font-size: 14px; line-height: 20px; color: #a6a6a6; width: 250px; }
.toastapp { font-size: 12px; line-height: 16px; margin-top: 5px; color: #a6a6a6; }
.toastbtn { margin-top: auto; height: 32px; background: #666; text-align: center; font-size: 13.400px; line-height: 32px; }
```
